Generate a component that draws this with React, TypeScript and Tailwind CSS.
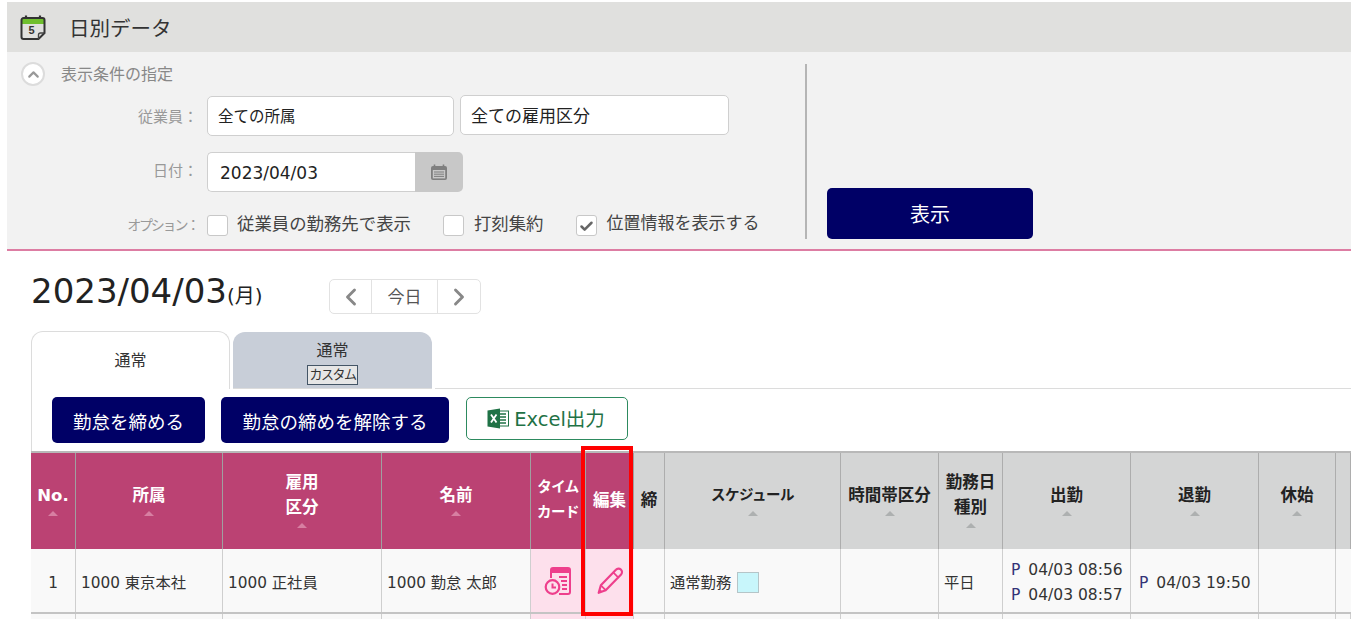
import React from 'react';
import { ChevronUp, ChevronLeft, ChevronRight, Check } from 'lucide-react';

const SortMark = ({ dark }: { dark?: boolean }) => (
  <div className="h-3 flex items-center justify-center">
    <svg width="12" height="6" viewBox="0 0 12 6">
      <path d="M6 0 L11 5 L1 5 Z" fill={dark ? '#adb0b0' : '#d77fa2'} />
    </svg>
  </div>
);

const CalendarIcon = () => (
  <svg width="28" height="28" viewBox="0 0 28 28" fill="none">
    <path d="M2.5 7 a2 2 0 0 1 2-2 h19 a2 2 0 0 1 2 2 v4 h-23 Z" fill="#6fbf2e" />
    <path d="M7 2.5 v3.5 M21 2.5 v3.5" stroke="#333" strokeWidth="2.2" />
    <path d="M2.5 7 a2 2 0 0 1 2-2 h19 a2 2 0 0 1 2 2 v13 l-6 6 h-15 a2 2 0 0 1-2-2 Z" stroke="#333" strokeWidth="2" />
    <path d="M25.5 20 h-4 a2 2 0 0 0-2 2 v4" stroke="#444" strokeWidth="1.4" />
    <text x="9.5" y="21" fontSize="11" fontWeight="700" fill="#333" fontFamily="Liberation Sans">5</text>
  </svg>
);

const SmallCalendar = () => (
  <svg width="18" height="17" viewBox="0 0 18 17">
    <path d="M4.5 0.5 v3 M13.5 0.5 v3" stroke="#7f7f7f" strokeWidth="1.6" />
    <rect x="1" y="2" width="16" height="14" rx="2" fill="#7f7f7f" />
    <rect x="2.8" y="6" width="12.4" height="8.4" fill="#c8c8c8" />
    <path d="M4 8 h10 M4 10.2 h10 M4 12.4 h10" stroke="#7f7f7f" strokeWidth="1" />
  </svg>
);

const ExcelIcon = () => (
  <svg width="22" height="21" viewBox="0 0 22 21">
    <rect x="10" y="3" width="11.5" height="15" fill="#fff" stroke="#1f7246" strokeWidth="1" />
    <path d="M13 6 h6 M13 9 h6 M13 12 h6 M13 15 h6" stroke="#1f7246" strokeWidth="1.6" />
    <path d="M0.5 2.5 L13 0.5 V20.5 L0.5 18.5 Z" fill="#1f7246" />
    <path d="M4 6.5 L9.5 14.5 M9.5 6.5 L4 14.5" stroke="#fff" strokeWidth="1.8" />
  </svg>
);

const TimeCardIcon = () => (
  <svg width="28" height="28" viewBox="0 0 28 28" fill="none">
    <path d="M7 11 V3 a2 2 0 0 1 2-2 h15 a2 2 0 0 1 2 2 v22 a2 2 0 0 1-2 2 H15" stroke="#ee3f8c" strokeWidth="2" />
    <path d="M8 2 h17 v4 H8 Z" fill="#ee3f8c" />
    <path d="M15 10 h8 M17 14 h6 M18 18 h5 M18 22 h5" stroke="#ee3f8c" strokeWidth="2" />
    <circle cx="8.5" cy="20" r="6.8" fill="#fde0ec" stroke="#ee3f8c" strokeWidth="2.2" />
    <path d="M8.5 16.5 V20.5 H12" stroke="#ee3f8c" strokeWidth="2" />
  </svg>
);

const PencilIcon = () => (
  <svg width="28" height="28" viewBox="0 0 26 26" fill="none">
    <path d="M18.5 2.5 a3.2 3.2 0 0 1 4.8 4.4 L9 21.5 L2.5 24 L4.5 17 Z" stroke="#ee3f8c" strokeWidth="2" strokeLinejoin="round" />
    <path d="M16 5 L21 10 M4.5 17 L9 21.5" stroke="#ee3f8c" strokeWidth="1.6" />
    <path d="M2.5 24 L3.5 20.5 L6 22.8 Z" fill="#ee3f8c" />
  </svg>
);

const Checkbox = ({ checked }: { checked?: boolean }) => (
  <div className="w-[21px] h-[21px] bg-white border border-[#c8c8c8] rounded-[3px] flex items-center justify-center">
    {checked && <Check size={15} strokeWidth={4} className="text-[#666] mt-[2px]" />}
  </div>
);

const Field = ({ children, className }: { children: React.ReactNode; className: string }) => (
  <div className={`h-10 bg-white border border-[#cfcfcf] rounded-[5px] flex items-center pt-[4px] text-[#222] ${className}`}>
    {children}
  </div>
);

const headers = [
  { lines: ['No.'], sort: true, pink: true },
  { lines: ['所属'], sort: true, pink: true },
  { lines: ['雇用', '区分'], sort: true, pink: true },
  { lines: ['名前'], sort: true, pink: true },
  { lines: ['タイム', 'カード'], sort: false, pink: true, kana: true },
  { lines: ['編集'], sort: false, pink: true },
  { lines: ['締'], sort: false, pink: false },
  { lines: ['スケジュール'], sort: true, pink: false, kana: true },
  { lines: ['時間帯区分'], sort: true, pink: false },
  { lines: ['勤務日', '種別'], sort: true, pink: false },
  { lines: ['出勤'], sort: true, pink: false },
  { lines: ['退勤'], sort: true, pink: false },
  { lines: ['休始'], sort: true, pink: false },
  { lines: [], sort: false, pink: false },
];

const cols = 'grid grid-cols-[45px_147px_159px_149px_55px_48px_31px_176px_98px_64px_128px_128px_77px_15px]';

const App: React.FC = () => {
  const cell = 'border-r border-[#cfcfcf] bg-[#f9f9f9] flex items-center';

  return (
    <div className="w-[1360px] h-[619px] overflow-hidden bg-white pt-[2px] pl-[7px] font-['DejaVu_Sans','Noto_Sans_CJK_JP',sans-serif] text-[#333]">
      <div className="w-[1344px]">
        {/* Title */}
        <div className="h-[50px] bg-[#e0e0de] flex items-center pl-[12px] gap-[22px]">
          <CalendarIcon />
          <h1 className="text-[20.5px] font-normal text-[#333] pt-[5px]">日別データ</h1>
        </div>

        {/* Conditions */}
        <div className="h-[199px] bg-[#f2f2f2] border-b-2 border-[#dd7da3] flex">
          <div className="w-[798px] pt-[10px]">
            <div className="h-6 flex items-center pl-[14px] gap-[16px] text-[16px] text-[#888]">
              <div className="w-6 h-6 rounded-full bg-white border-2 border-[#dcdcdc] flex items-center justify-center">
                <ChevronUp size={17} strokeWidth={3} className="text-[#999]" />
              </div>
              <span className="pt-[2px]">表示条件の指定</span>
            </div>

            <div className="flex items-center mt-[10px]">
              <div className="w-[191px] pt-[2px] text-right text-[15px] text-[#999]">従業員：</div>
              <div className="flex items-start gap-[6px] ml-[9px]">
                <Field className="w-[247px] pl-[10px] text-[15.5px]">全ての所属</Field>
                <Field className="w-[269px] pl-[10px] -mt-[1px] text-[17px]">全ての雇用区分</Field>
              </div>
            </div>

            <div className="flex items-center mt-[16px]">
              <div className="w-[191px] pb-[2px] text-right text-[15px] text-[#999]">日付：</div>
              <div className="flex ml-[9px]">
                <Field className="w-[208px] pl-[12px] rounded-r-none border-r-0 text-[17px]">2023/04/03</Field>
                <div className="w-[48px] h-10 bg-[#c8c8c8] rounded-r-[5px] flex items-center justify-center">
                  <SmallCalendar />
                </div>
              </div>
            </div>

            <div className="flex items-center mt-[19px]">
              <div className="w-[191px] text-right text-[14px] tracking-[-2.2px] text-[#999]">オプション：</div>
              <div className="flex items-center ml-[9px] text-[17.4px] text-[#444]">
                <Checkbox />
                <span className="ml-[9px] pb-[2px]">従業員の勤務先で表示</span>
                <div className="ml-[32px]"><Checkbox /></div>
                <span className="ml-[10px] pb-[2px]">打刻集約</span>
                <div className="ml-[32px]"><Checkbox checked /></div>
                <span className="ml-[10px] pb-[2px] text-[17px]">位置情報を表示する</span>
              </div>
            </div>
          </div>

          <div className="w-[2px] h-[175px] mt-[12px] bg-[#b5b5b5]" />

          <div className="ml-[20px] pt-[136px]">
            <button className="w-[206px] h-[51px] pt-[3px] bg-[#000066] rounded-[5px] text-white text-[20px]">表示</button>
          </div>
        </div>

        {/* Date */}
        <div className="pl-[24px]">
          <div className="h-[80px] flex items-start pt-[20px]">
            <div className="h-10 flex items-baseline text-[#222] w-[298px]">
              <span className="text-[34px] leading-10">2023/04/03</span>
              <span className="text-[20px]">(月)</span>
            </div>
            <div className="mt-[8px] h-[35px] flex border border-[#e2e2e2] rounded-[5px] text-[#555]">
              <div className="w-[42px] flex items-center justify-center border-r border-[#e2e2e2]">
                <ChevronLeft size={28} strokeWidth={2.5} className="text-[#888]" />
              </div>
              <div className="w-[66px] flex items-center justify-center border-r border-[#e2e2e2] pt-[3px] text-[17px]">今日</div>
              <div className="w-[42px] flex items-center justify-center">
                <ChevronRight size={28} strokeWidth={2.5} className="text-[#888]" />
              </div>
            </div>
          </div>

          {/* Tabs */}
          <div className="flex h-[58px] items-end gap-[3px]">
            <div className="w-[199px] h-[58px] bg-white border border-b-0 border-[#dcdcdc] rounded-t-[12px] flex justify-center pt-[17px] text-[16px] text-[#333] relative z-10">
              通常
            </div>
            <div className="w-[199px] h-[57px] border-b border-[#dcdcdc] bg-[#c8ced8] rounded-t-[12px] flex flex-col items-center pt-[7px] text-[16px] text-[#333]">
              <span className="leading-[24px]">通常</span>
              <span className="mt-[2px] text-[13px] leading-[18px] px-[1px] border border-[#445566] bg-[#e6e6e6] tracking-[-1.5px]">カスタム</span>
            </div>
            <div className="flex-1 border-b border-[#dcdcdc]" />
          </div>

          {/* Toolbar and table */}
          <div className="border-l border-[#dcdcdc]">
            <div className="h-[62px] flex items-start pt-[8px] pl-[20px]">
              <button className="w-[153px] h-[46px] pt-[6px] bg-[#000066] rounded-[5px] text-white text-[18.5px]">勤怠を締める</button>
              <button className="ml-[16px] w-[228px] h-[46px] pt-[6px] bg-[#000066] rounded-[5px] text-white text-[18.5px]">勤怠の締めを解除する</button>
              <button className="ml-[17px] w-[162px] h-[43px] bg-white border border-[#2d8a5f] rounded-[5px] text-[#1f7246] text-[19.5px] flex items-center justify-center gap-[5px] pr-[2px]">
                <ExcelIcon />
                <span className="pt-[3px]">Excel出力</span>
              </button>
            </div>
          </div>

          <div className="relative w-[1320px]">
            <div className={`${cols} h-[98px] border-t-2 border-[#b8b8b8]`}>
              {headers.map((h, i) => (
                <div
                  key={i}
                  className={`flex flex-col items-center justify-center font-bold leading-[25px] border-r whitespace-nowrap ${
                    h.sort ? '' : 'pb-[2px]'
                  } ${h.kana ? 'text-[14.5px] tracking-[-0.5px]' : 'text-[16.5px]'} ${
                    h.pink ? 'bg-[#bb4273] text-white border-[#a0a0a0]' : 'bg-[#d4d5d5] text-[#222] border-[#adadad]'
                  }`}
                >
                  {h.lines.map((l) => (
                    <div key={l}>{l}</div>
                  ))}
                  {h.sort && <SortMark dark={!h.pink} />}
                </div>
              ))}
            </div>

            <div className={`${cols} h-[65px] text-[15.3px] text-[#333] border-b-2 border-[#c4c4c4]`}>
              <div className={`${cell} justify-center pt-[6px]`}>1</div>
              <div className={`${cell} pl-[5px] pt-[6px]`}>1000 東京本社</div>
              <div className={`${cell} pl-[5px] pt-[6px]`}>1000 正社員</div>
              <div className={`${cell} pl-[5px] pt-[6px]`}>1000 勤怠 太郎</div>
              <div className="border-r border-[#cfcfcf] bg-[#fde0ec] flex items-center justify-center"><TimeCardIcon /></div>
              <div className="bg-[#fde0ec] flex items-center justify-center"><PencilIcon /></div>
              <div className={cell} />
              <div className={`${cell} pl-[5px] gap-[6px]`}>
                <span className="pt-[6px]">通常勤務</span>
                <div className="w-[22px] h-[21px] mt-[4px] bg-[#c8f6fb] border border-[#b5c5c8]" />
              </div>
              <div className={cell} />
              <div className={`${cell} pl-[5px] pt-[6px]`}>平日</div>
              <div className={`${cell} flex-col !items-start justify-center pl-[8px] pt-[4px] leading-[25px] whitespace-nowrap text-[15.5px]`}>
                <div><span className="text-[#333377] mr-[8px]">P</span>04/03 08:56</div>
                <div><span className="text-[#333377] mr-[8px]">P</span>04/03 08:57</div>
              </div>
              <div className={`${cell} pl-[8px] pt-[6px] whitespace-nowrap text-[15.5px]`}>
                <span className="text-[#333377] mr-[8px]">P</span>04/03 19:50
              </div>
              <div className={cell} />
              <div className="bg-[#f9f9f9]" />
            </div>

            <div className={`${cols} h-[6px]`}>
              {headers.map((h, i) => (
                <div key={i} className={`border-r border-[#cfcfcf] ${i === 4 || i === 5 ? 'bg-[#fde0ec]' : 'bg-[#f9f9f9]'}`} />
              ))}
            </div>

            {/* Red highlight */}
            <div className="absolute left-[550px] top-[-5px] w-[52px] h-[170px] border-[4px] border-[#ff0000]" />
          </div>
        </div>
      </div>
    </div>
  );
};

export default App;
